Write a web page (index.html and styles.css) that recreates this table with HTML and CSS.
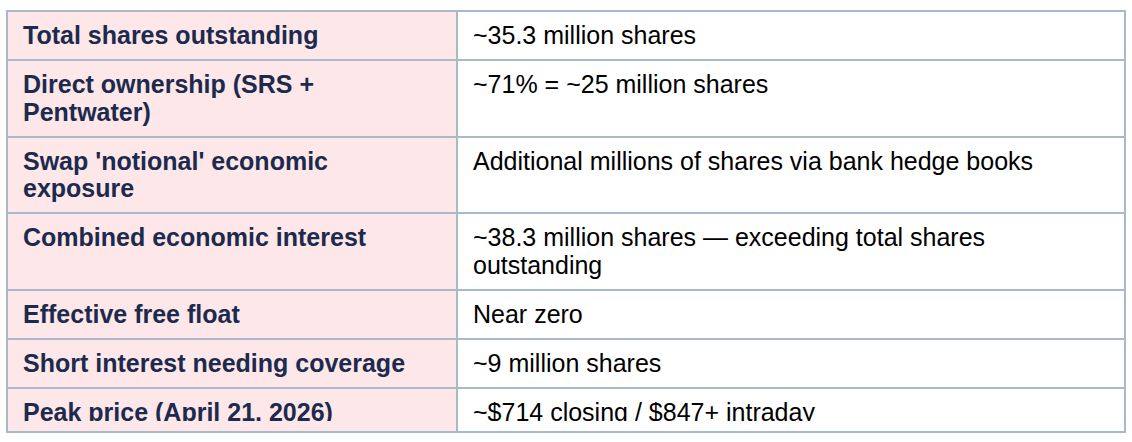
FILE: index.html
```html
<!DOCTYPE html>
<html>
<head>
<meta charset="utf-8">
<link rel="stylesheet" href="styles.css">
</head>
<body>
<table class="facts">
  <tr><th>Total shares outstanding</th><td>~35.3 million shares</td></tr>
  <tr><th>Direct ownership (SRS + Pentwater)</th><td>~71% = ~25 million shares</td></tr>
  <tr><th>Swap 'notional' economic exposure</th><td>Additional millions of shares via bank hedge books</td></tr>
  <tr><th>Combined economic interest</th><td>~38.3 million shares — exceeding total shares outstanding</td></tr>
  <tr><th>Effective free float</th><td>Near zero</td></tr>
  <tr><th>Short interest needing coverage</th><td>~9 million shares</td></tr>
  <tr class="last"><th><div class="clip">Peak price (April 21, 2026)</div></th><td><div class="clip">~$714 closing / $847+ intraday</div></td></tr>
</table>
</body>
</html>
```
FILE: styles.css
```css
html, body { margin: 0; padding: 0; background: #ffffff; }
body { padding: 10px 7px 0 6px; }
.facts {
  width: 1120px;
  border-collapse: collapse;
  font-family: "Liberation Sans", Arial, sans-serif;
  font-size: 25px;
  line-height: 27.5px;
}
.facts th, .facts td {
  border: 2px solid #a9b9c9;
  padding: 10px 15px 9.5px;
  text-align: left;
  vertical-align: top;
}
.facts th {
  width: 418px;
  background: #fde7e9;
  color: #1c2a4d;
  font-weight: bold;
}
.facts td { color: #000000; font-weight: normal; }
.last th, .last td { padding-bottom: 10px; }
.clip { height: 22px; overflow: hidden; }
```
